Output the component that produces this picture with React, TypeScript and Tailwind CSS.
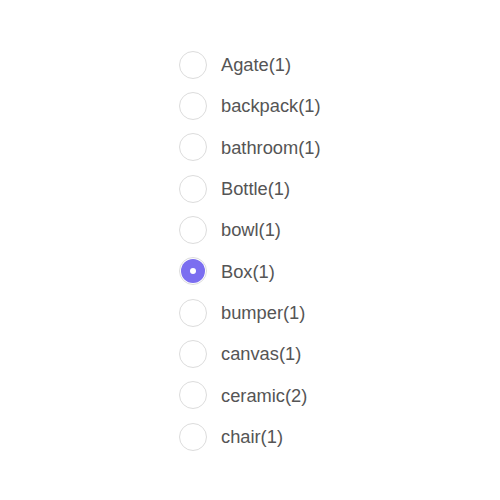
import React, { useState } from "react";

const items = [
  "Agate(1)",
  "backpack(1)",
  "bathroom(1)",
  "Bottle(1)",
  "bowl(1)",
  "Box(1)",
  "bumper(1)",
  "canvas(1)",
  "ceramic(2)",
  "chair(1)",
];

export default function App() {
  const [sel, setSel] = useState(5);
  return (
    <div className="w-[500px] h-[500px] bg-white pt-[44px] pl-[179px]" style={{ fontFamily: '"Liberation Sans", Arial, sans-serif' }}>
      <div className="flex flex-col">
        {items.map((it, i) => (
          <label key={it} className="flex items-center h-[41.33px] cursor-pointer" onClick={() => setSel(i)}>
            <span className="w-[28px] h-[28px] rounded-full border border-[#dcdcdc] flex items-center justify-center shrink-0">
              {sel === i && (
                <span className="w-[24px] h-[24px] rounded-full bg-[#7b6ef0] flex items-center justify-center">
                  <span className="w-[6px] h-[6px] rounded-full bg-white" />
                </span>
              )}
            </span>
            <span className="ml-[14px] text-[18.3px] text-[#555555]">{it}</span>
          </label>
        ))}
      </div>
    </div>
  );
}
